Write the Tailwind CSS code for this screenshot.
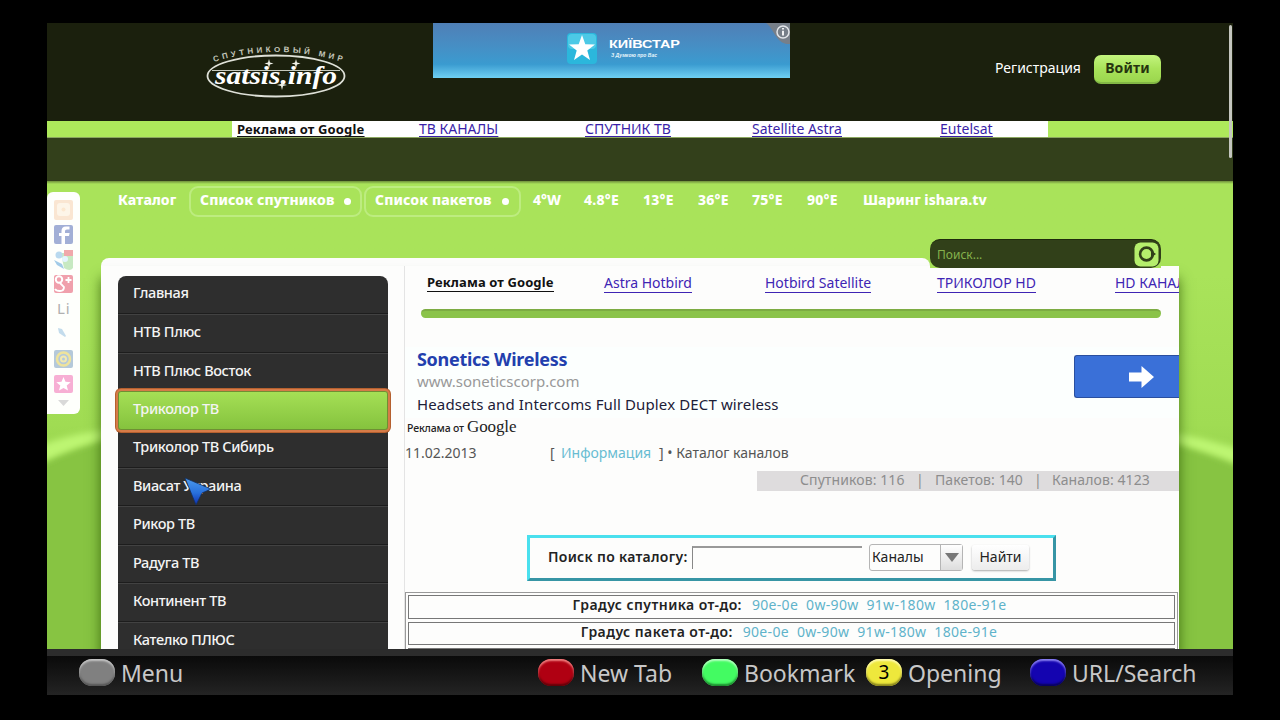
<!DOCTYPE html>
<html lang="ru">
  <head>
    <meta charset="UTF-8" />
    <meta name="viewport" content="width=device-width, initial-scale=1.0" />
    <title>satsis.info</title>
    <script src="https://cdn.jsdelivr.net/npm/@tailwindcss/browser@4"></script>
  </head>
  <body class="bg-black overflow-hidden font-['Noto_Sans','Open_Sans',sans-serif]">
    <main class="relative mt-[23px] ml-[47px] w-[1186px] h-[672px] flex flex-col overflow-hidden whitespace-nowrap">
      <!-- header -->
      <header class="h-[98px] shrink-0 bg-[#1b200d] flex items-start">
        <svg class="mt-[20px] ml-[156px] w-[146px] h-[60px]" viewBox="0 0 146 60">
          <defs><path id="arc" d="M11 19 Q73 -1 140 19" /></defs>
          <text class="font-['Liberation_Sans']" font-size="8" fill="#c3c6ba" font-weight="bold"><textPath href="#arc" textLength="130">СПУТНИКОВЫЙ МИР</textPath></text>
          <ellipse cx="73" cy="33" rx="68.500" ry="20.500" fill="none" stroke="#dfe1d8" stroke-width="1.800" />
          <path d="M9 27.500H137" stroke="#c6c9bd" stroke-width="1.200" />
          <text x="12" y="41" class="font-['Liberation_Serif']" font-size="26" font-style="italic" font-weight="bold" fill="#fff" textLength="122" lengthAdjust="spacingAndGlyphs">satsis.info</text>
          <path d="M66 16l1 3.500 3.500 1-3.500 1-1 3.500-1-3.500-3.500-1 3.500-1zM93 16l1 3.500 3.500 1-3.500 1-1 3.500-1-3.500-3.500-1 3.500-1zM79 37l1 4 4 1-4 1-1 4-1-4-4-1 4-1z" fill="#eef0e8" />
        </svg>
        <div class="relative ml-[84px] w-[357px] h-[55px] bg-linear-to-b from-[#4f7fb6] via-[#3a9bd0] via-75% to-[#6fd0f2] flex items-start overflow-hidden">
          <svg class="mt-[8px] ml-[132px] w-[34px] h-[34px]" viewBox="0 0 34 34">
            <rect x="2" y="2" width="30" height="31" rx="4" fill="#2bb7dc" />
            <rect x="3" y="3" width="28" height="15" rx="4" fill="#4cc9e6" />
            <path d="M17 4l3.300 9.300 9.700.300-7.700 6 2.700 9.400-8-5.600-8 5.600 2.700-9.400-7.700-6 9.700-.300z" fill="#fff" />
          </svg>
          <svg class="mt-[11px] ml-[9px] w-[76px] h-[26px]" viewBox="0 0 76 26">
            <text x="1" y="14" class="font-['Liberation_Sans']" font-size="11.500" font-weight="bold" fill="#fff" textLength="71" lengthAdjust="spacingAndGlyphs">КИЇВСТАР</text>
            <text x="3" y="23" class="font-['Liberation_Sans']" font-size="5.500" font-style="italic" font-weight="bold" fill="#e6f4fb" textLength="46" lengthAdjust="spacingAndGlyphs">З Думкою про Вас</text>
          </svg>
          <svg class="absolute right-0 top-0 w-[24px] h-[21px]" viewBox="0 0 24 21">
            <path d="M0 0H24V21C10 22 8 5 0 0z" fill="#777f89" />
            <circle cx="17" cy="9" r="6" fill="none" stroke="#e3e6ea" stroke-width="1.500" />
            <path d="M17 7.700V12.500M17 5v1.500" stroke="#fff" stroke-width="1.800" />
          </svg>
        </div>
        <a class="mt-[34px] ml-[205px] w-[99px] text-[14px] leading-[22px] text-white">Регистрация</a>
        <a class="mt-[32px] w-[67px] h-[29px] rounded-[7px] bg-linear-to-b from-[#c3f47d] via-[#a9e35a] to-[#9bd64e] border-b-2 border-[#83b845] text-center text-[14px] leading-[26px] font-bold tracking-[0.15px] text-[#26330f]">Войти</a>
      </header>

      <!-- ad links strip -->
      <div class="h-[17px] shrink-0 bg-[#aee95b] border-b border-[#8ba65f]">
        <div class="ml-[185px] w-[816px] h-[16px] bg-white pl-[5px] grid grid-cols-[182px_166px_167px_188px_auto] text-[14px] leading-[15px] text-[#3a1fa8] underline underline-offset-2 [text-decoration-skip-ink:none]">
          <a class="text-[13px] leading-[16px] font-bold tracking-[0.15px] text-[#111] underline underline-offset-2">Реклама от Google</a>
          <a>ТВ КАНАЛЫ</a>
          <a>СПУТНИК ТВ</a>
          <a>Satellite Astra</a>
          <a>Eutelsat</a>
        </div>
      </div>
      <div class="h-[43px] shrink-0 bg-[#33401b]"></div>

      <!-- page body -->
      <section class="relative h-[468px] shrink-0 overflow-hidden bg-linear-to-b from-[#a9e35a] from-20% via-[#a0dc53] via-52% to-[#8bc648] to-75%">
        <svg class="absolute inset-0 w-full h-full" viewBox="0 0 1186 468">
          <defs>
            <filter id="soft" x="-20%" y="-100%" width="140%" height="300%"><feGaussianBlur stdDeviation="3" /></filter>
          </defs>
          <path d="M-10 282Q30 264 64 256V480H-10zM1120 258Q1160 270 1200 286V480H1120z" fill="#87c443" filter="url(#soft)" />
          <path d="M-10 266Q20 253 64 248V257Q30 264 -10 284zM1120 250Q1160 258 1200 270V287Q1160 270 1120 260z" fill="#bdf672" filter="url(#soft)" />
        </svg>
        <div class="absolute inset-x-0 top-0 h-[3px] bg-linear-to-b from-[#6e8f3c] to-transparent"></div>

        <div class="relative flex flex-col h-full">
          <nav class="h-[77px] shrink-0 pt-[5px] pl-[71px] grid grid-cols-[71px_175px_169px_51px_59px_55px_54px_55px_56px_auto] items-start text-[14px] leading-[28px] font-extrabold text-white">
            <a>Каталог</a>
            <a class="w-[173px] h-[31px] rounded-[9px] border-2 border-[#bdec80] pl-[9px] leading-[24px] tracking-[0.1px] flex items-start gap-[10px]">Список спутников<i class="mt-[10px] size-[7px] rounded-full bg-white"></i></a>
            <a class="w-[157px] h-[31px] rounded-[9px] border-2 border-[#bdec80] pl-[9px] leading-[24px] tracking-[0.1px] flex items-start gap-[11px]">Список пакетов<i class="mt-[10px] size-[7px] rounded-full bg-white"></i></a>
            <a>4°W</a>
            <a class="tracking-[0.2px]">4.8°E</a>
            <a class="tracking-[0.2px]">13°E</a>
            <a class="tracking-[0.2px]">36°E</a>
            <a class="tracking-[0.2px]">75°E</a>
            <a class="tracking-[0.2px]">90°E</a>
            <a>Шаринг ishara.tv</a>
          </nav>

          <div class="ml-[54px] w-[829px] h-[8px] shrink-0 rounded-t-[8px] bg-[#fdfdfc]"></div>
          <div class="ml-[54px] w-[1078px] grow bg-[#fdfdfc] shadow-[0_12px_12px_rgba(40,80,0,0.75)] flex overflow-hidden">
            <!-- sidebar -->
            <ul class="mt-[10px] ml-[17px] w-[270px] shrink-0 h-[390px] rounded-t-[8px] bg-[#2e2e2e] text-[14.500px] tracking-[-0.380px] leading-[32px] font-medium text-[#f4f4f4]">
              <li class="h-[38.400px] pl-[15px] leading-[33px] border-b border-[#1d1d1d]">Главная</li>
              <li class="h-[38.400px] pl-[15px] border-t border-t-[#424242] border-b border-b-[#1d1d1d]">НТВ Плюс</li>
              <li class="h-[38.400px] pl-[15px] border-t border-t-[#424242]">НТВ Плюс Восток</li>
              <li class="relative h-[38.400px] pl-[15px] bg-linear-to-b from-[#a6e056] to-[#84c23d] leading-[34px] outline-2 outline-[#d67b48] rounded-[3px] shadow-[0_0_0_3px_#b5602f,inset_0_0_0_1px_#6f8f33]">Триколор ТВ</li>
              <li class="h-[38.400px] pl-[15px] leading-[33px] border-b border-[#1d1d1d]">Триколор ТВ Сибирь</li>
              <li class="h-[38.400px] pl-[15px] border-t border-t-[#424242] border-b border-b-[#1d1d1d]">Виасат Украина</li>
              <li class="h-[38.400px] pl-[15px] border-t border-t-[#424242] border-b border-b-[#1d1d1d]">Рикор ТВ</li>
              <li class="h-[38.400px] pl-[15px] border-t border-t-[#424242] border-b border-b-[#1d1d1d]">Радуга ТВ</li>
              <li class="h-[38.400px] pl-[15px] border-t border-t-[#424242] border-b border-b-[#1d1d1d]">Континент ТВ</li>
              <li class="h-[38.400px] pl-[15px] border-t border-t-[#424242]">Кателко ПЛЮС</li>
            </ul>

            <!-- content -->
            <div class="-mt-[8px] ml-[16px] w-[775px] shrink-0 border-l border-[#e4e4e4] flex flex-col overflow-hidden text-[14px]">
              <div class="mt-[16px] ml-[22px] h-[26px] grid grid-cols-[177px_161px_172px_178px_100px] leading-[17px] text-[#3f25b4]">
                <a class="text-[13px] font-bold tracking-[0.1px] text-[#111]"><span class="border-b border-current">Реклама от Google</span></a>
                <a><span class="border-b border-current">Astra Hotbird</span></a>
                <a><span class="border-b border-current">Hotbird Satellite</span></a>
                <a><span class="border-b border-current">ТРИКОЛОР HD</span></a>
                <a><span class="border-b border-current">HD КАНАЛЫ</span></a>
              </div>
              <div class="mt-[18px] ml-[16px] w-[740px] h-[9px] shrink-0 rounded-full bg-[#8bc34a] border-t-2 border-[#7dac43]"></div>

              <div class="mt-[29px] h-[71px] shrink-0 flex justify-between bg-[#fcfffe]">
                <div class="pl-[12px]">
                  <h2 class="text-[18px] leading-[24px] font-bold tracking-[-0.300px] text-[#233fae]">Sonetics Wireless</h2>
                  <p class="text-[15px] leading-[21px] text-[#999]">www.soneticscorp.com</p>
                  <p class="text-[15px] leading-[24px] tracking-[0.130px] text-[#1c2038]">Headsets and Intercoms Full Duplex DECT wireless</p>
                </div>
                <a class="mt-[8px] w-[105px] h-[43px] bg-[#3a70d8] border-y border-l border-[#2a4f9f] rounded-l-[3px] flex items-center">
                  <svg class="ml-[54px] w-[25px] h-[22px]" viewBox="0 0 25 22"><path d="M0 6.500H12.500V0L25 11 12.500 22V15.500H0z" fill="#fff" /></svg>
                </a>
              </div>
              <div class="h-[21px] shrink-0 pl-[2px] flex items-baseline text-[#222]">
                <span class="text-[10.500px] font-medium tracking-[-0.150px] leading-[19px]">Реклама от</span>
                <span class="ml-[3px] font-['Liberation_Serif'] text-[17px] tracking-[-0.100px] leading-[18px]">Google</span>
              </div>
              <div class="h-[30px] shrink-0 grid grid-cols-[145px_11px_98px_auto] leading-[27px] text-[#555]">
                <span>11.02.2013</span>
                <span>[</span>
                <a class="text-[#68bcd2]">Информация</a>
                <span>] • Каталог каналов</span>
              </div>
              <div class="mt-[2px] ml-[352px] h-[20px] shrink-0 bg-[#dedcdd] pl-[43px] grid grid-cols-[116px_19px_99px_18px_auto] leading-[18px] tracking-[0.100px] text-[#8d8d8d]">
                <span>Спутников: 116</span>
                <span>|</span>
                <span>Пакетов: 140</span>
                <span>|</span>
                <span>Каналов: 4123</span>
              </div>

              <form class="mt-[44px] ml-[122px] w-[529px] h-[46px] shrink-0 border-[3px] border-t-[#4ae0ee] border-l-[#4ae0ee] border-b-[#3795a5] border-r-[#3795a5] flex items-center pl-[18px] pb-[2px] text-[#222]">
                <label class="w-[144px] font-semibold tracking-[0.300px] leading-[20px]">Поиск по каталогу:</label>
                <span class="w-[170px] h-[23px] border-t-2 border-t-[#999] border-l border-l-[#888]"></span>
                <span class="ml-[7px] w-[94px] h-[27px] border border-[#b5b5b5] rounded-[3px] flex">
                  <span class="w-[70px] pl-[2px] leading-[23px]">Каналы</span>
                  <span class="grow border-l border-[#b5b5b5] bg-linear-to-b from-white to-[#ddd] flex items-center justify-center">
                    <svg class="w-[14px] h-[9px]" viewBox="0 0 14 9"><path d="M0 0H14L7 9z" fill="#777" /></svg>
                  </span>
                </span>
                <span class="ml-[9px] w-[57px] h-[25px] rounded-[3px] bg-linear-to-b from-white to-[#ececec] shadow-[0_1px_2px_#aaa] text-center leading-[24px]">Найти</span>
              </form>

              <div class="mt-[11px] h-[90px] shrink-0 mr-px border border-[#999] p-[2px] flex flex-col gap-[3px]">
                <div class="h-[24px] border border-[#777] flex justify-center gap-[10px] pr-[4px] leading-[18px] text-[#5fb3ca]">
                  <b class="font-semibold tracking-[0.430px] text-[#222]">Градус спутника от-до:</b><span class="tracking-[0.320px]">90e-0e&nbsp; 0w-90w&nbsp; 91w-180w&nbsp; 180e-91e</span>
                </div>
                <div class="h-[23px] border border-[#777] flex justify-center gap-[10px] pr-[5px] leading-[18px] text-[#5fb3ca]">
                  <b class="font-semibold tracking-[0.450px] text-[#222]">Градус пакета от-до:</b><span class="tracking-[0.320px]">90e-0e&nbsp; 0w-90w&nbsp; 91w-180w&nbsp; 180e-91e</span>
                </div>
                <div class="h-[24px] border border-[#777]"></div>
              </div>
            </div>
          </div>
        </div>

        <!-- site search -->
        <div class="absolute left-[883px] top-[58px] w-[231px] h-[29px] bg-[#a8e25a] rounded-tl-[10px]">
          <div class="h-[29px] rounded-[10px] bg-[#314019] border-t border-[#1f2a0d] pl-[7px] pr-[2px] flex items-center justify-between text-[12px] text-[#86b34c]">
            <span class="mt-[2px]">Поиск...</span>
            <svg class="w-[25px] h-[25px]" viewBox="0 0 25 25">
              <rect x=".500" y=".500" width="24" height="24" rx="6" fill="#b5ee6c" />
              <circle cx="12.500" cy="12" r="6.400" fill="none" stroke="#314019" stroke-width="2.600" />
              <path d="M17 8.500L22 12l-5 3.500z" fill="#314019" />
            </svg>
          </div>
        </div>

        <!-- share buttons -->
        <div class="absolute left-0 top-[11px] w-[33px] h-[222px] rounded-r-[6px] rounded-tl-[6px] bg-[#fefffc]">
          <svg class="w-[33px] h-[222px]" viewBox="0 0 33 222">
            <rect x="7" y="8" width="19" height="20" rx="2" fill="#fae6d2" />
            <rect x="10" y="11" width="13" height="13" rx="3" fill="#fdf5e8" />
            <rect x="14.500" y="15.500" width="4" height="4" rx="2" fill="#fce8d0" />
            <rect x="7" y="33" width="19" height="19" rx="2" fill="#a2afd6" />
            <path d="M18 52V44h4l.600-3H18v-1.500c0-1.200.600-2 2-2h2.500v-3h-3.500c-3.200 0-4.500 2-4.500 4.500v2H12v3h2.500v8z" fill="#fff" />
            <path d="M14 61h12v15q-3 4-9 0z" fill="#c7e9c2" />
            <rect x="17" y="58" width="9" height="6" fill="#f0a8ab" />
            <circle cx="12" cy="63" r="3.500" fill="#b9d9ef" /><circle cx="18" cy="67" r="3" fill="#e4f5ff" /><path d="M7 68l8 4 2 5-7-4z" fill="#a2cbe8" />
            <rect x="7" y="83" width="19" height="18" rx="2" fill="#f0a0ac" />
            <circle cx="12" cy="87.500" r="3.200" fill="none" stroke="#fff" stroke-width="2" />
            <path d="M13 91l4 4q0 4-4 4t-5-2M21.500 85v6M18.500 88h6" fill="none" stroke="#fff" stroke-width="1.800" />
            <text x="10" y="122" font-size="15" letter-spacing="1" fill="#b0b0b0">Li</text>
            <path d="M11 136l4 1 4 7-1 1-6-4z" fill="#c3dcec" />
            <rect x="7" y="158" width="19" height="18" rx="2" fill="#b5c9da" />
            <circle cx="16.500" cy="167" r="6.500" fill="none" stroke="#eee39c" stroke-width="2.500" />
            <circle cx="16.500" cy="167" r="2.500" fill="none" stroke="#f2e9b0" stroke-width="2" />
            <rect x="7" y="183" width="19" height="18" rx="2" fill="#f7afd4" />
            <path d="M16.500 185l2 4.800 5.200.400-4 3.400 1.300 5-4.500-2.700-4.500 2.700 1.300-5-4-3.400 5.200-.400z" fill="#fff" />
            <path d="M11 208H22l-5.500 6z" fill="#d9d9d9" />
          </svg>
        </div>

        <!-- mouse pointer -->
        <svg class="absolute left-[137px] top-[294px] w-[30px] h-[32px]" viewBox="0 0 30 32">
          <defs>
            <linearGradient id="ptr" x1="0" y1="0" x2="0" y2="1"><stop offset="0" stop-color="#4d9bec" /><stop offset=".550" stop-color="#2870dc" /><stop offset="1" stop-color="#0f2fae" /></linearGradient>
          </defs>
          <path d="M1 3L27 14 18 18 12 30z" fill="url(#ptr)" stroke="#14305e" stroke-width=".800" />
        </svg>
      </section>

      <!-- remote control bar -->
      <footer class="h-[46px] shrink-0 border-t-[7px] border-[#2c2c2c] bg-linear-to-b from-[#0a0a0a] to-[#242424] pl-[32px] grid grid-cols-[459px_164px_164px_164px_auto] text-[23px] leading-[34px] text-[#c8c8c8]">
        <div class="flex"><i class="mt-[3px] mr-[6px] w-[36px] h-[27px] rounded-[13px] bg-[#808080] shadow-[inset_0_2px_2px_#c4c4c4,inset_0_-2px_2px_#555]"></i>Menu</div>
        <div class="flex"><i class="mt-[3px] mr-[6px] w-[36px] h-[27px] rounded-[13px] bg-[#b00012] shadow-[inset_0_2px_2px_#f08080,inset_0_-2px_2px_#600008]"></i>New Tab</div>
        <div class="flex"><i class="mt-[3px] mr-[6px] w-[36px] h-[27px] rounded-[13px] bg-[#43fb62] shadow-[inset_0_2px_2px_#b5ffc0,inset_0_-2px_2px_#1c8a2e]"></i>Bookmark</div>
        <div class="flex"><i class="mt-[3px] mr-[6px] w-[36px] h-[27px] rounded-[13px] bg-[#eee83c] shadow-[inset_0_2px_2px_#fffbb0,inset_0_-2px_2px_#85811c] not-italic text-center text-[19px] leading-[27px] text-black">3</i>Opening</div>
        <div class="flex"><i class="mt-[3px] mr-[6px] w-[36px] h-[27px] rounded-[13px] bg-[#1404b0] shadow-[inset_0_2px_2px_#8a80f0,inset_0_-2px_2px_#08025c]"></i>URL/Search</div>
      </footer>

      <!-- scrollbar -->
      <div class="absolute left-[1182px] top-[2px] w-[3px] h-[133px] rounded-full bg-[#c4c6bf]"></div>
    </main>
  </body>
</html>
